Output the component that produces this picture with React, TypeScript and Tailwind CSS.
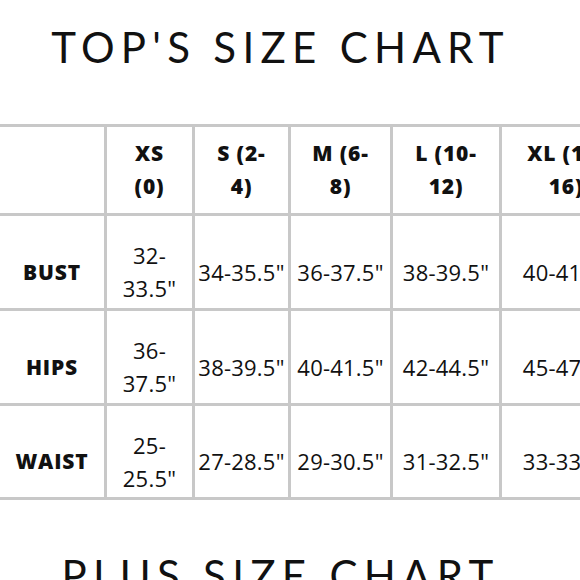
import React from "react";

const rows: { label: string; values: string[][] }[] = [
  { label: "BUST", values: [["32-", "33.5\""], ["34-35.5\""], ["36-37.5\""], ["38-39.5\""], ["40-41.5\""]] },
  { label: "HIPS", values: [["36-", "37.5\""], ["38-39.5\""], ["40-41.5\""], ["42-44.5\""], ["45-47.5\""]] },
  { label: "WAIST", values: [["25-", "25.5\""], ["27-28.5\""], ["29-30.5\""], ["31-32.5\""], ["33-33.5\""]] },
];

const headers: string[][] = [["XS", "(0)"], ["S (2-", "4)"], ["M (6-", "8)"], ["L (10-", "12)"], ["XL (14-", "16)"]];

function Lines({ lines, bold, body }: { lines: string[]; bold?: boolean; body?: boolean }) {
  return (
    <div
      className={`bg-white flex flex-col items-center justify-center text-center leading-[33px] text-[#111] ${
        bold ? "font-extrabold text-[21px] tracking-[0.04em]" : "font-normal text-[22px] tracking-[0.01em]"
      } ${body ? "pt-[20px]" : ""}`}
    >
      {lines.map((l, i) => (
        <span key={i} className="whitespace-nowrap">{l}</span>
      ))}
    </div>
  );
}

export default function App() {
  return (
    <div className="w-[580px] h-[580px] overflow-hidden bg-white" style={{ fontFamily: "Lato, 'Open Sans', sans-serif" }}>
      <div className="pt-[26px] flex justify-center">
        <h1 className="text-[42px] leading-none font-normal tracking-[0.15em] text-[#111] whitespace-nowrap -ml-[19px]">TOP'S SIZE CHART</h1>
      </div>
      <div
        className="mt-[56px] w-max grid grid-cols-[104px_85px_93px_99px_106px_128px] grid-rows-[86px_92px_92px_91px] gap-[3px] bg-[#c8c8c8] py-[3px]"
        style={{ fontFamily: "'Open Sans', sans-serif" }}
      >
        <div className="bg-white" />
        {headers.map((h, i) => (
          <Lines key={i} lines={h} bold />
        ))}
        {rows.map((r) => (
          <React.Fragment key={r.label}>
            <Lines lines={[r.label]} bold body />
            {r.values.map((v, i) => (
              <Lines key={i} lines={v} body />
            ))}
          </React.Fragment>
        ))}
      </div>
      <div className="pt-[54px] flex justify-center">
        <h2 className="text-[42px] leading-none font-normal tracking-[0.15em] text-[#111] whitespace-nowrap -ml-[19px]">PLUS SIZE CHART</h2>
      </div>
    </div>
  );
}
